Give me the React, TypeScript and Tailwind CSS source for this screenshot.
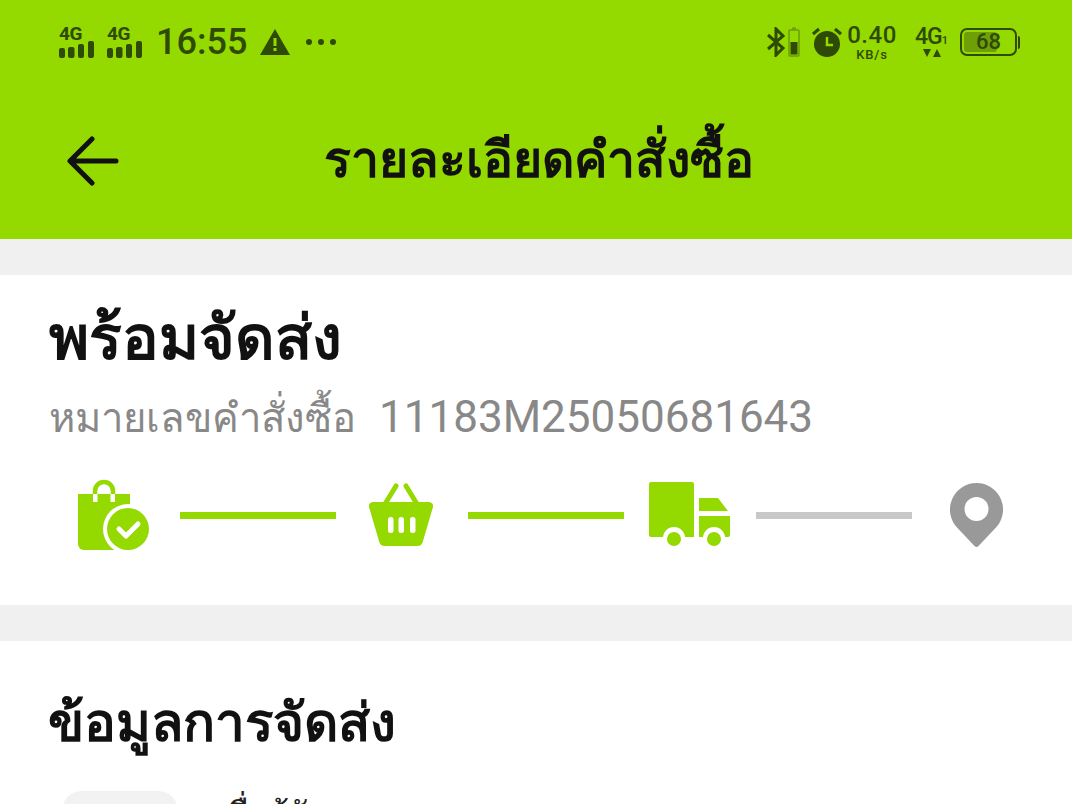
const FONT = "font-['Roboto','Noto_Sans','Noto_Sans_CJK_SC',sans-serif]";

function Signal() {
  return (
    <div className="flex w-[36px] flex-col items-start">
      <span className="h-[13px] text-[19px] font-bold leading-[13px] tracking-[-0.5px] text-[#2f4a05]">4G</span>
      <svg className="mt-[1px]" width="36" height="17" viewBox="0 0 36 17" fill="#2f4a05">
        <rect x="0" y="7" width="6" height="10" rx="2" />
        <rect x="9" y="6" width="6.500" height="11" rx="2" />
        <rect x="19" y="3" width="6" height="14" rx="2" />
        <rect x="29" y="0" width="6" height="17" rx="2" />
      </svg>
    </div>
  );
}

function StatusBar() {
  return (
    <div className="flex h-[84px] shrink-0 items-center justify-between pl-[59px] pr-[52px] text-[#2f4a05]">
      <div className="flex items-center">
        <Signal />
        <div className="ml-[12px]">
          <Signal />
        </div>
        <span className="ml-[13px] text-[36px] font-medium leading-none">16:55</span>
        <svg className="ml-[13px]" width="30" height="26" viewBox="0 0 30 26">
          <path d="M15 0 L30 26 H0 Z" fill="#2f4a05" />
          <rect x="13.500" y="9" width="3" height="8" fill="#94d900" />
          <rect x="13.500" y="19" width="3" height="3" fill="#94d900" />
        </svg>
        <svg className="ml-[15px]" width="32" height="8" viewBox="0 0 32 8" fill="#2f4a05">
          <circle cx="4" cy="4" r="3" />
          <circle cx="16" cy="4" r="3" />
          <circle cx="28" cy="4" r="3" />
        </svg>
      </div>
      <div className="flex items-center">
        <svg width="20" height="30" viewBox="0 0 20 30" fill="none" stroke="#2f4a05" strokeWidth="3">
          <path d="M2 8 L17 21 L10 28 V2 L17 9 L2 22" />
        </svg>
        <svg className="ml-[2px]" width="12" height="30" viewBox="0 0 12 30">
          <rect x="1" y="3" width="10" height="26" rx="1" fill="none" stroke="#6b9c0a" strokeWidth="1.500" />
          <rect x="4" y="0.500" width="4" height="2" fill="#6b9c0a" />
          <rect x="2.500" y="15" width="7" height="12.500" fill="#2f4a05" />
        </svg>
        <svg className="ml-[12px]" width="30" height="30" viewBox="0 0 30 30">
          <circle cx="15" cy="17" r="13" fill="#2f4a05" />
          <path d="M15 10 V18 H21" fill="none" stroke="#94d900" strokeWidth="2.500" />
          <path d="M1 7 L7 2 M29 7 L23 2" stroke="#2f4a05" strokeWidth="3" />
        </svg>
        <div className="ml-[6px] flex w-[48px] flex-col items-center">
          <span className="h-[22px] text-[24px] font-medium leading-[22px] tracking-[0.5px]">0.40</span>
          <span className="mt-[3px] h-[11px] text-[13px] font-medium leading-[11px] tracking-[0.8px]">KB/s</span>
        </div>
        <div className="ml-[19px] flex w-[36px] flex-col items-start">
          <div className="flex h-[20px] items-end">
            <span className="text-[23px] font-medium leading-[20px] tracking-[-1px]">4G</span>
            <span className="text-[11px] font-medium leading-[12px]">1</span>
          </div>
          <svg className="ml-[8px] mt-[1px]" width="18" height="10" viewBox="0 0 18 10" fill="#2f4a05">
            <path d="M0 1 H8 L4 9 Z" />
            <path d="M14 1 L18 9 H10 Z" />
          </svg>
        </div>
        <div className="ml-[9px] flex items-center">
          <div className="flex h-[28px] w-[57px] items-center rounded-[7px] border-2 border-[#2f4a05] p-[2px]">
            <div className="relative flex h-full w-full items-center rounded-[3px]">
              <div className="h-full w-[68%] rounded-[3px] bg-[#6f9f06]" />
              <span className="absolute inset-x-0 text-center text-[22px] font-medium leading-none">68</span>
            </div>
          </div>
          <div className="ml-[1px] h-[13px] w-[2px] rounded-r-sm bg-[#2f4a05]" />
        </div>
      </div>
    </div>
  );
}

function BagIcon() {
  return (
    <svg width="72" height="72" viewBox="0 0 72 72">
      <path d="M0 15 H52 V71 H6 a6 6 0 0 1 -6 -6 Z" fill="#94d900" />
      <path d="M17 24 V12 a9 9 0 0 1 18 0 V24" fill="none" stroke="#94d900" strokeWidth="4.500" />
      <rect x="15" y="15" width="4.500" height="8" fill="#fff" />
      <rect x="32.500" y="15" width="4.500" height="8" fill="#fff" />
      <circle cx="50" cy="50" r="25" fill="#fff" />
      <circle cx="50" cy="50" r="21" fill="#94d900" />
      <path d="M41 50 L48 57 L60 45" fill="none" stroke="#fff" strokeWidth="5" strokeLinecap="round" strokeLinejoin="round" />
    </svg>
  );
}

function BasketIcon() {
  return (
    <svg width="64" height="64" viewBox="0 0 64 64">
      <path d="M4 19 H60 a4 4 0 0 1 4 5 L54 58 a6 6 0 0 1 -6 5 H16 a6 6 0 0 1 -6 -5 L0 24 a4 4 0 0 1 4 -5 Z" fill="#94d900" />
      <path d="M16 21 L27 3 M48 21 L37 3" fill="none" stroke="#94d900" strokeWidth="5" strokeLinecap="round" />
      <rect x="19" y="34" width="5.500" height="16" rx="2.500" fill="#fff" />
      <rect x="29.500" y="34" width="5.500" height="16" rx="2.500" fill="#fff" />
      <rect x="41" y="34" width="5.500" height="16" rx="2.500" fill="#fff" />
    </svg>
  );
}

function TruckIcon() {
  return (
    <svg width="81" height="66" viewBox="0 0 81 66">
      <path d="M0 2 a2 2 0 0 1 2 -2 H43 a2 2 0 0 1 2 2 V55 H2 a2 2 0 0 1 -2 -2 Z" fill="#94d900" />
      <path d="M50 16 H69 L79 29 H50 Z" fill="#94d900" />
      <path d="M50 34 H81 V53 a2 2 0 0 1 -2 2 H50 Z" fill="#94d900" />
      <circle cx="25" cy="56" r="11" fill="#fff" />
      <circle cx="25" cy="57" r="7" fill="#94d900" />
      <circle cx="65" cy="56" r="11" fill="#fff" />
      <circle cx="65" cy="57" r="7" fill="#94d900" />
    </svg>
  );
}

function PinIcon() {
  return (
    <svg width="53" height="64" viewBox="0 0 53 64">
      <path d="M26.500 0 a26.500 26.500 0 0 1 19 45 L28.500 63 a3 3 0 0 1 -4 0 L7.500 45 A26.500 26.500 0 0 1 26.500 0 Z" fill="#999999" />
      <circle cx="26.500" cy="26" r="12" fill="#fff" />
    </svg>
  );
}

export default function App() {
  return (
    <div className={`flex h-[804px] w-[1072px] flex-col overflow-hidden bg-[#f0f0f0] ${FONT}`}>
      <header className="flex h-[239px] shrink-0 flex-col bg-[#94d900]">
        <StatusBar />
        <div className="relative flex flex-1 items-center justify-center pb-[4px] pl-[6px]">
          <svg className="absolute left-[67px] top-[52px]" width="52" height="50" viewBox="0 0 52 50" fill="none" stroke="#111" strokeWidth="5">
            <path d="M49 25 H5 M25 3 L3 25 L25 47" strokeLinecap="round" strokeLinejoin="round" />
          </svg>
          <h1 className="text-[50px] font-semibold leading-none text-[#111]">รายละเอียดคำสั่งซื้อ</h1>
        </div>
      </header>

      <section className="mt-[36px] h-[330px] shrink-0 bg-white">
        <h2 className="pl-[49px] pt-[28px] text-[61px] font-semibold leading-[70px] text-[#111]">พร้อมจัดส่ง</h2>
        <p className="mt-[18px] flex items-baseline pl-[49px] text-[40px] leading-[52px] text-[#888888]">
          <span>หมายเลขคำสั่งซื้อ</span>
          <span className="ml-[23px] text-[44px]">11183M25050681643</span>
        </p>
        <div className="mt-[34px] flex h-[72px] items-center pl-[78px]">
          <BagIcon />
          <div className="ml-[30px] h-[7px] w-[156px] bg-[#94d900]" />
          <div className="ml-[33px]"><BasketIcon /></div>
          <div className="ml-[35px] h-[7px] w-[156px] bg-[#94d900]" />
          <div className="ml-[25px]"><TruckIcon /></div>
          <div className="ml-[26px] h-[7px] w-[156px] bg-[#c8c8c8]" />
          <div className="ml-[38px]"><PinIcon /></div>
        </div>
      </section>

      <section className="mt-[36px] flex-1 bg-white">
        <h2 className="pl-[48px] pt-[47px] text-[53px] font-semibold leading-[70px] text-[#111]">ข้อมูลการจัดส่ง</h2>
        <div className="mt-[33px] flex items-start pl-[62px]">
          <div className="h-[60px] w-[116px] rounded-[20px] bg-[#f2f2f2]" />
          <span className="ml-[48px] mt-[-2px] text-[34px] leading-[50px] text-[#222]">ชื่อผู้รับ</span>
        </div>
      </section>
    </div>
  );
}
